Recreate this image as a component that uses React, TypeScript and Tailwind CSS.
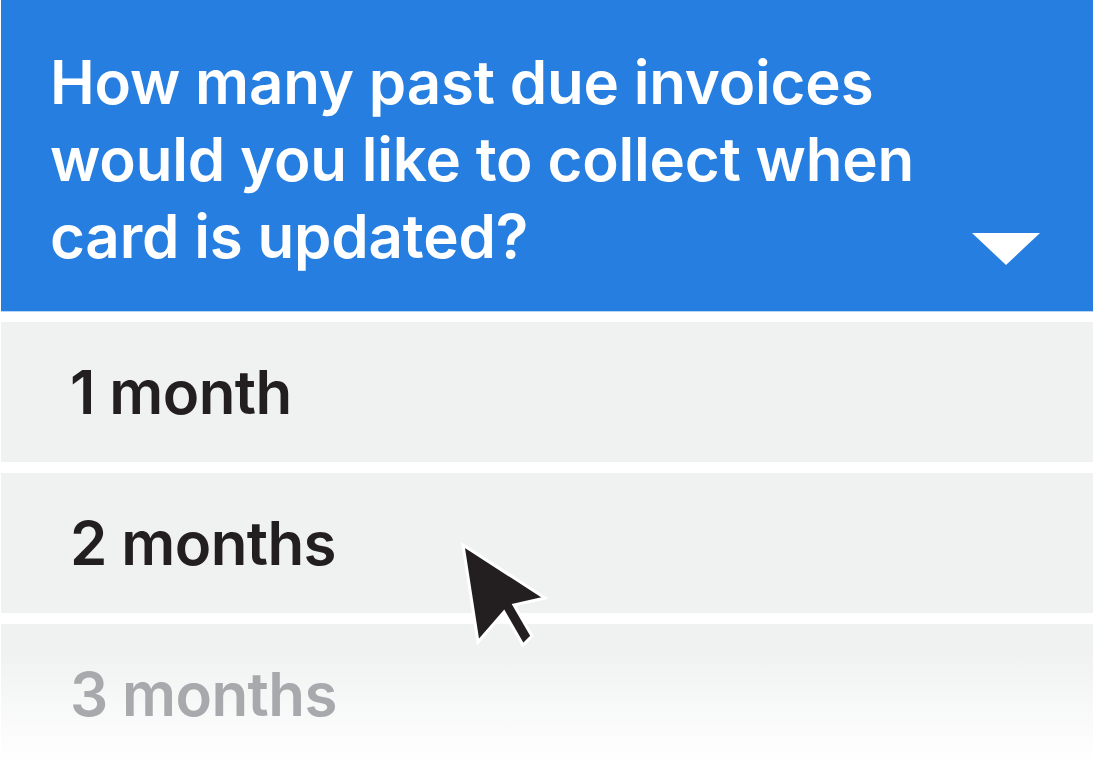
import React from "react";

const options = [
  { label: "1 month", muted: false },
  { label: "2 months", muted: false },
  { label: "3 months", muted: true },
];

function Cursor() {
  return (
    <svg
      className="absolute left-[452px] top-[536px]"
      width="104"
      height="120"
      viewBox="0 0 104 120"
    >
      <path
        d="M11 9 L93 62 L62 69 L80 100 L71 109 L52 76 L26 106 Z"
        fill="#231f20"
        stroke="#ffffff"
        strokeWidth="3"
        strokeLinejoin="miter"
      />
    </svg>
  );
}

export default function App() {
  return (
    <div
      className="relative h-[765px] w-[1093px] overflow-hidden bg-white pl-px"
      style={{ fontFamily: "Inter, 'Noto Sans', sans-serif" }}
    >
      <div className="flex h-[312px] items-end justify-between border-b border-[#b9d5f5] bg-[#257ee0] pl-[49px] pr-[53px] pb-[36px]">
        <h1 className="text-[60px] font-semibold leading-[77px] tracking-[-0.003em] text-white">
          How many past due invoices
          <br />
          would you like to collect when
          <br />
          card is updated?
        </h1>
        <svg width="68" height="32" viewBox="0 0 68 32" className="mb-[10px]">
          <path d="M0 0 H68 L34 32 Z" fill="#ffffff" />
        </svg>
      </div>

      <div className="mt-[10px] flex flex-col gap-[11px]">
        {options.map((o) => (
          <div
            key={o.label}
            className={
              o.muted
                ? "flex h-[140px] items-center bg-gradient-to-b from-[#f0f2f1] from-20% to-white pl-[69px]"
                : "flex h-[140px] items-center bg-[#f0f2f1] pl-[69px]"
            }
          >
            <span
              className={
                o.muted
                  ? "text-[60px] font-semibold tracking-[-0.01em] text-[#a8a9ac]"
                  : "text-[60px] font-semibold tracking-[-0.01em] text-[#231f20]"
              }
            >
              {o.label}
            </span>
          </div>
        ))}
      </div>

      <Cursor />
    </div>
  );
}
